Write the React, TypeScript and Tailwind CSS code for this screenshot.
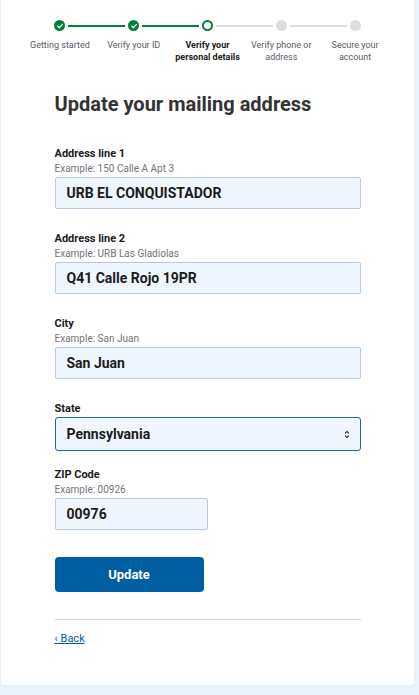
import React from "react";

const steps = [
  { label: "Getting started", state: "done" },
  { label: "Verify your ID", state: "done" },
  { label: "Verify your personal details", state: "current" },
  { label: "Verify phone or address", state: "todo" },
  { label: "Secure your account", state: "todo" },
];

function StepDot({ state }: { state: string }) {
  if (state === "done") {
    return (
      <span className="flex h-[11px] w-[11px] shrink-0 items-center justify-center rounded-full bg-[#00803a]">
        <svg viewBox="0 0 12 12" className="h-[8px] w-[8px]" aria-hidden="true">
          <path d="M2.5 6.2 5 8.6 9.6 3.6" fill="none" stroke="#fff" strokeWidth="2" strokeLinecap="round" strokeLinejoin="round" />
        </svg>
      </span>
    );
  }
  if (state === "current") {
    return <span className="h-[11px] w-[11px] shrink-0 rounded-full border-2 border-[#00803a] bg-white" />;
  }
  return <span className="h-[11px] w-[11px] shrink-0 rounded-full bg-[#dcdee0]" />;
}

function Stepper() {
  return (
    <ol className="grid grid-cols-5 px-[22px]">
      {steps.map((s, i) => {
        const leftGreen = i <= 2;
        const rightGreen = i < 2;
        return (
          <li key={s.label} className="flex flex-col items-center">
            <div className="flex w-full items-center gap-[3px]">
              <span className={`h-[2px] flex-1 ${i === 0 ? "bg-transparent" : leftGreen ? "bg-[#00803a]" : "bg-[#dcdee0]"}`} />
              <StepDot state={s.state} />
              <span className={`h-[2px] flex-1 ${i === steps.length - 1 ? "bg-transparent" : rightGreen ? "bg-[#00803a]" : "bg-[#dcdee0]"}`} />
            </div>
            <span
              className={`mt-[8px] text-center text-[9px] leading-[12px] ${
                s.state === "current" ? "font-bold text-[#1b1b1b]" : "text-[#565c65]"
              }`}
            >
              {s.label}
            </span>
          </li>
        );
      })}
    </ol>
  );
}

function Field({
  label,
  hint,
  value,
  narrow,
  className = "",
}: {
  label: string;
  hint?: string;
  value: string;
  narrow?: boolean;
  className?: string;
}) {
  return (
    <div className={`flex flex-col ${className}`}>
      <span className="text-[11px] font-bold leading-[14px] text-[#1b1b1b]">{label}</span>
      {hint && <span className="mt-[1px] text-[10px] leading-[13px] text-[#71767a]">{hint}</span>}
      <div
        className={`mt-[2px] flex h-[32px] items-center rounded-[2px] border border-[#b7cbe0] bg-[#eff6fd] px-[11px] text-[14px] font-bold text-[#1b1b1b] ${
          narrow ? "w-[153px]" : "w-full"
        }`}
      >
        {value}
      </div>
    </div>
  );
}

export default function App() {
  return (
    <div className="min-h-[695px] bg-[#e8f2fb] pb-[5px] pl-[1px] pr-[5px] font-['Roboto',sans-serif]">
      <div className="rounded-b-[4px] bg-white pb-[36px] pt-[20px]">
        <Stepper />
        <main className="mx-auto mt-[27px] w-[306px]">
          <h1 className="text-[20px] font-bold leading-[28px] text-[#333]">Update your mailing address</h1>
          <div className="mt-[29px] flex flex-col">
            <Field label="Address line 1" hint="Example: 150 Calle A Apt 3" value="URB EL CONQUISTADOR" />
            <Field className="mt-[23px]" label="Address line 2" hint="Example: URB Las Gladiolas" value="Q41 Calle Rojo 19PR" />
            <Field className="mt-[23px]" label="City" hint="Example: San Juan" value="San Juan" />
            <div className="mt-[23px] flex flex-col">
              <span className="text-[11px] font-bold leading-[14px] text-[#1b1b1b]">State</span>
              <div className="mt-[1px] flex h-[34px] items-center justify-between rounded-[3px] border border-[#2066a8] bg-[#eff6fd] pl-[11px] pr-[10px] text-[14px] font-bold text-[#1b1b1b]">
                <span>Pennsylvania</span>
                <svg viewBox="0 0 8 12" className="h-[9px] w-[6px]" aria-hidden="true">
                  <path d="M1.5 4.5 4 2l2.5 2.5M1.5 7.5 4 10l2.5-2.5" fill="none" stroke="#1b1b1b" strokeWidth="1.4" />
                </svg>
              </div>
            </div>
            <Field className="mt-[17px]" label="ZIP Code" hint="Example: 00926" value="00976" narrow />
          </div>
          <button className="mt-[27px] h-[35px] w-[149px] rounded-[4px] bg-[#005ea2] text-[13px] font-bold text-white">
            Update
          </button>
          <div className="mt-[27px] border-t border-[#c5d8ea]" />
          <a href="#" className="mt-[12px] inline-block text-[11px] leading-[14px] text-[#005ea2] underline">
            ‹ Back
          </a>
        </main>
      </div>
    </div>
  );
}
